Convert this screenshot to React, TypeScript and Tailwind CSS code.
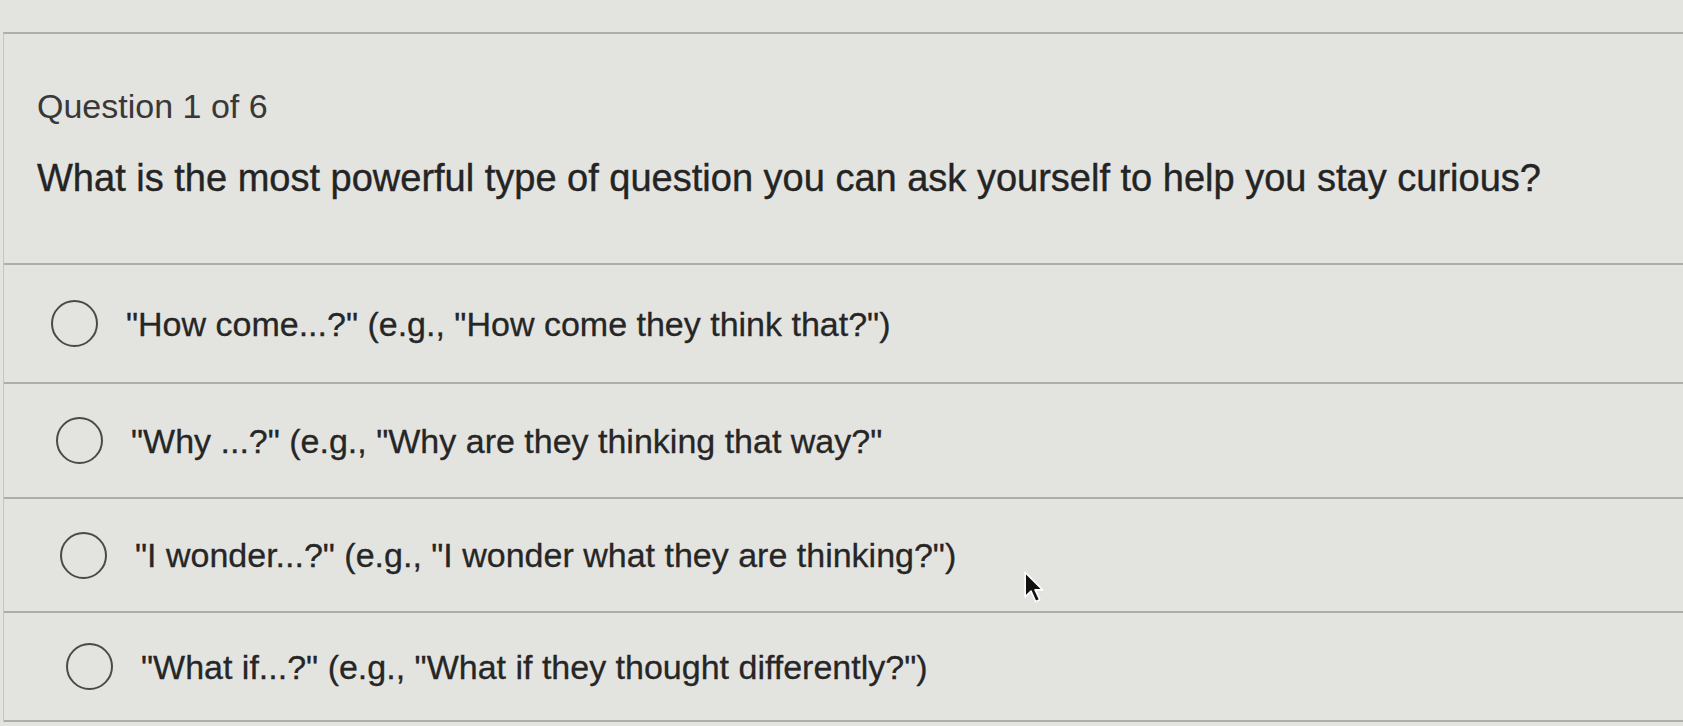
import React from "react";

const OPTIONS = [
  { id: "a", label: '"How come...?" (e.g., "How come they think that?")', row: "h-[119px] pl-[47px]" },
  { id: "b", label: '"Why ...?" (e.g., "Why are they thinking that way?"', row: "h-[115px] pl-[52px]" },
  { id: "c", label: '"I wonder...?" (e.g., "I wonder what they are thinking?")', row: "h-[114px] pl-[56px]" },
  { id: "d", label: '"What if...?" (e.g., "What if they thought differently?")', row: "h-[109px] pl-[62px]" },
];

const Cursor = () => (
  <svg viewBox="0 0 18 28" width="21" height="33" className="absolute left-[1024px] top-[571px]">
    <path
      d="M1 1 L1 22 L6 17 L10 26 L13.5 24.5 L9.5 16 L16 16 Z"
      fill="#111"
      stroke="#fff"
      strokeWidth="1.4"
      strokeLinejoin="round"
    />
  </svg>
);

export default function App() {
  return (
    <div className="relative w-[1683px] h-[726px] overflow-hidden bg-[#e3e3e0] pt-[32px] font-['Liberation_Sans',Arial,sans-serif]">
      <div className="ml-[3px] border-t-2 border-l border-[#adadab] border-l-[#c4c4c1]">
        {/* header */}
        <div className="h-[231px] border-b-2 border-[#adadab] pl-[33px] pt-[55px]">
          <div className="text-[34px] leading-[34px] text-[#383838]">Question 1 of 6</div>
          <div className="mt-[36px] text-[38px] leading-[38px] text-[#242424] [-webkit-text-stroke:0.4px_#242424]">
            What is the most powerful type of question you can ask yourself to help you stay curious?
          </div>
        </div>

        {/* options */}
        {OPTIONS.map((opt) => (
          <label
            key={opt.id}
            className={`flex items-center gap-[28px] border-b-2 border-[#adadab] ${opt.row}`}
          >
            <span className="h-[47px] w-[47px] shrink-0 rounded-full border-[2.5px] border-[#4a4a4a]" />
            <span className="text-[34px] leading-[34px] text-[#262626] [-webkit-text-stroke:0.3px_#262626]">
              {opt.label}
            </span>
          </label>
        ))}
      </div>
      <Cursor />
    </div>
  );
}
